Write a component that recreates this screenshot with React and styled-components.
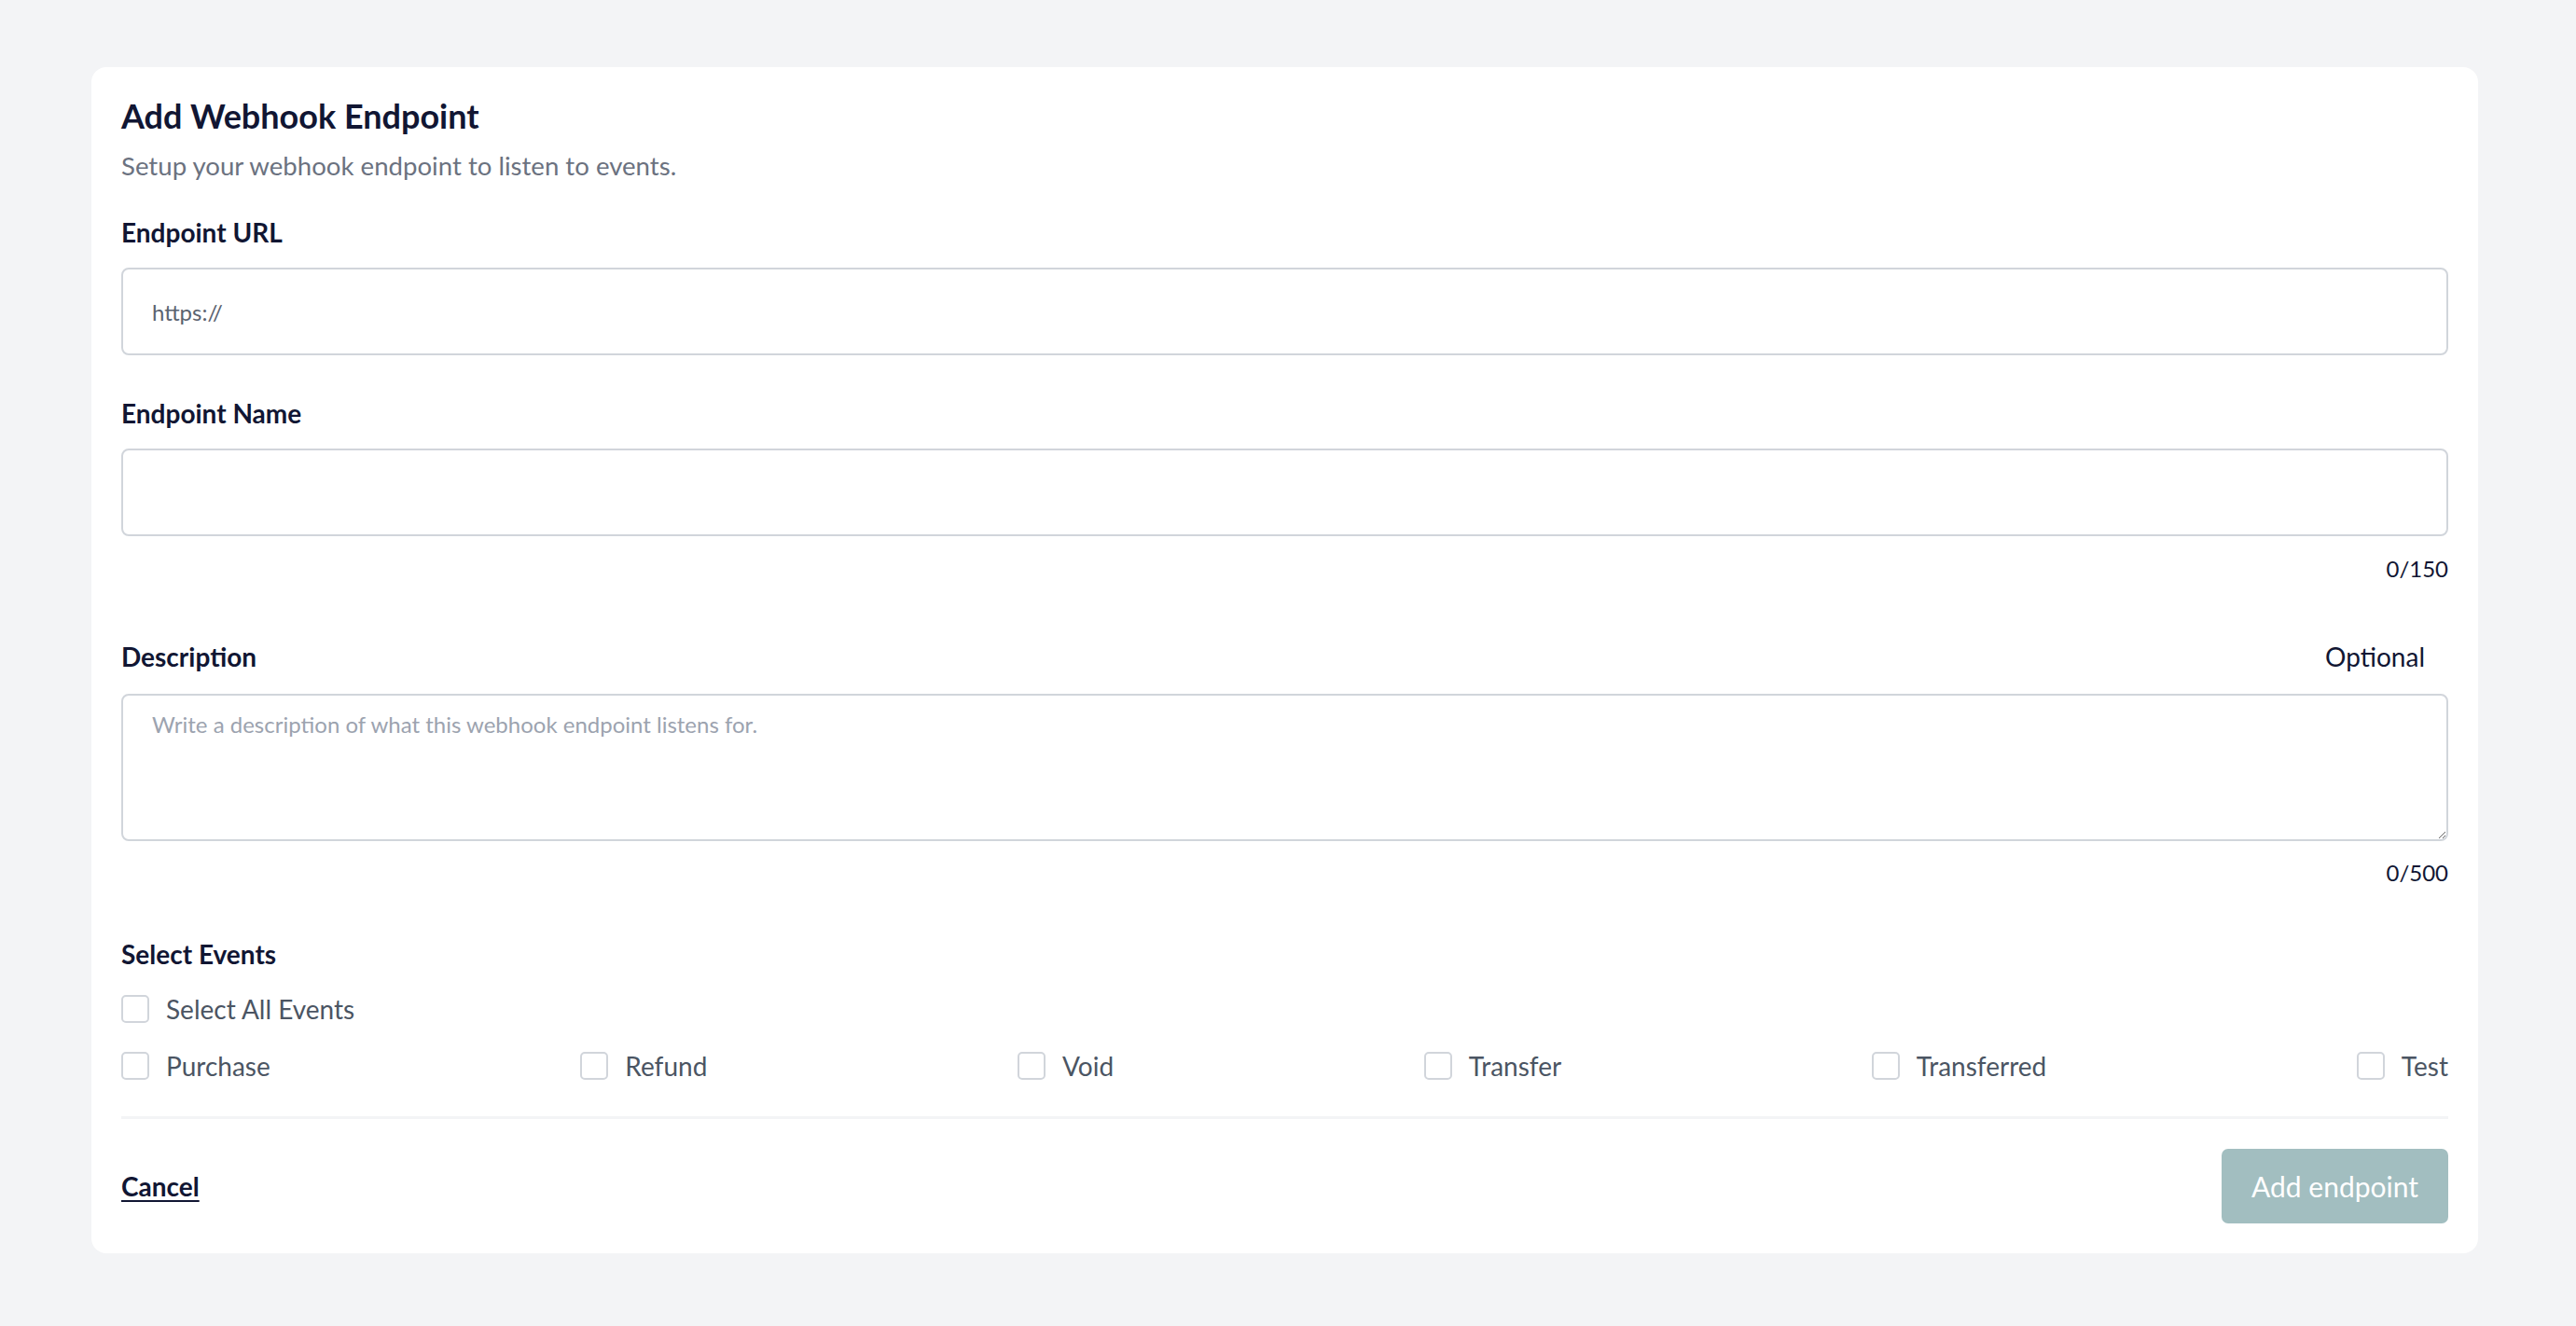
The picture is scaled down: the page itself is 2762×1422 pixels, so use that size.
import React from "react";
import styled, { createGlobalStyle } from "styled-components";

const Global = createGlobalStyle`
  html, body {
    margin: 0;
    padding: 0;
    background: #f3f4f6;
    font-family: Lato, "Noto Sans", sans-serif;
  }
  * { box-sizing: border-box; }
`;

const Page = styled.div`
  padding: 72px 105px 78px 98px;
  min-height: 1422px;
`;

const Card = styled.form`
  background: #ffffff;
  border-radius: 16px;
  padding: 32px;
  display: flex;
  flex-direction: column;
`;

const Title = styled.h1`
  margin: 0;
  font-size: 36px;
  line-height: 40px;
  font-weight: 700;
  color: #111633;
`;

const Subtitle = styled.p`
  margin: 14px 0 0;
  font-size: 27.6px;
  line-height: 40px;
  color: #6b7280;
`;

const Field = styled.div`
  display: flex;
  flex-direction: column;
  margin-top: ${(p) => p.$mt}px;
`;

const LabelRow = styled.div`
  display: flex;
  justify-content: space-between;
  align-items: center;
  margin-bottom: ${(p) => p.$gap || 18}px;
`;

const Label = styled.label`
  font-size: 28px;
  line-height: 40px;
  font-weight: 700;
  color: #111633;
`;

const Optional = styled.span`
  font-size: 28px;
  line-height: 40px;
  color: #111633;
  margin-right: 25px;
`;

const TextInput = styled.input`
  height: 94px;
  width: 100%;
  border: 2px solid #d1d5db;
  border-radius: 8px;
  padding: 0 31px;
  font-family: Lato, sans-serif;
  font-size: 24px;
  color: #5b6370;
  background: #fff;
  outline: none;
  &::placeholder { color: #9ca3af; }
`;

const TextArea = styled.textarea`
  height: 158px;
  width: 100%;
  border: 2px solid #d1d5db;
  border-radius: 8px;
  padding: 13px 31px;
  font-family: Lato, sans-serif;
  font-size: 24px;
  line-height: 36px;
  color: #5b6370;
  background: #fff;
  outline: none;
  resize: vertical;
  display: block;
  &::placeholder { color: #9ca3af; }
`;

const Counter = styled.div`
  align-self: flex-end;
  margin-top: ${(p) => p.$mt}px;
  font-size: 24px;
  line-height: 32px;
  color: #111633;
`;

const EventsLabel = styled(Label)`
  margin-top: 51px;
`;

const Row = styled.div`
  display: flex;
  justify-content: ${(p) => (p.$spread ? "space-between" : "flex-start")};
  align-items: center;
  margin-top: ${(p) => p.$mt}px;
`;

const Check = styled.label`
  display: flex;
  align-items: center;
  gap: 18px;
  height: 40px;
  font-size: 28px;
  line-height: 40px;
  color: #4b5563;
  cursor: pointer;
`;

const Box = styled.input.attrs({ type: "checkbox" })`
  appearance: none;
  -webkit-appearance: none;
  margin: 0;
  width: 30px;
  height: 30px;
  border: 2px solid #d1d5db;
  border-radius: 5px;
  background: #fff;
  flex: none;
`;

const Divider = styled.hr`
  margin: 34px 0 0;
  border: none;
  height: 3px;
  background: #f3f4f6;
`;

const Footer = styled.div`
  display: flex;
  justify-content: space-between;
  align-items: center;
  padding-top: 32px;
`;

const CancelLink = styled.a`
  font-size: 28px;
  font-weight: 700;
  color: #111633;
  text-decoration: underline;
  text-underline-offset: 4px;
  text-decoration-thickness: 2px;
  cursor: pointer;
`;

const SubmitButton = styled.button`
  height: 80px;
  padding: 0 32px;
  border: none;
  border-radius: 7px;
  background: #a2bec0;
  color: #ffffff;
  font-family: Lato, sans-serif;
  font-size: 30px;
  cursor: not-allowed;
`;

const events = ["Purchase", "Refund", "Void", "Transfer", "Transferred", "Test"];

export default function App() {
  return (
    <>
      <Global />
      <Page>
        <Card onSubmit={(e) => e.preventDefault()}>
          <Title>Add Webhook Endpoint</Title>
          <Subtitle>Setup your webhook endpoint to listen to events.</Subtitle>

          <Field $mt={31}>
            <LabelRow>
              <Label htmlFor="url">Endpoint URL</Label>
            </LabelRow>
            <TextInput id="url" defaultValue="https://" />
          </Field>

          <Field $mt={42}>
            <LabelRow>
              <Label htmlFor="name">Endpoint Name</Label>
            </LabelRow>
            <TextInput id="name" />
            <Counter $mt={19}>0/150</Counter>
          </Field>

          <Field $mt={58}>
            <LabelRow $gap={20}>
              <Label htmlFor="desc">Description</Label>
              <Optional>Optional</Optional>
            </LabelRow>
            <TextArea
              id="desc"
              placeholder="Write a description of what this webhook endpoint listens for."
            />
            <Counter $mt={18}>0/500</Counter>
          </Field>

          <EventsLabel as="div">Select Events</EventsLabel>
          <Row $mt={19}>
            <Check>
              <Box />
              Select All Events
            </Check>
          </Row>
          <Row $mt={21} $spread>
            {events.map((ev) => (
              <Check key={ev}>
                <Box />
                {ev}
              </Check>
            ))}
          </Row>

          <Divider />
          <Footer>
            <CancelLink>Cancel</CancelLink>
            <SubmitButton type="submit" disabled>
              Add endpoint
            </SubmitButton>
          </Footer>
        </Card>
      </Page>
    </>
  );
}
